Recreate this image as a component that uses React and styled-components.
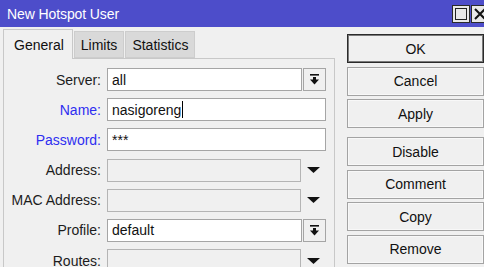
import styled, {createGlobalStyle} from "styled-components";

const GlobalStyle = createGlobalStyle`
    html, body {
        margin: 0;
        padding: 0;
        background: #f0f0f0;
    }
    body {
        font-family: "Liberation Sans", Arial, sans-serif;
        font-size: 14px;
        color: #1c1c1c;
    }
`

const fields = [
    {label: "Server", kind: "combo", value: "all"},
    {label: "Name", kind: "text", value: "nasigoreng", blue: true, caret: true},
    {label: "Password", kind: "text", value: "***", blue: true},
    {label: "Address", kind: "empty"},
    {label: "MAC Address", kind: "empty"},
    {label: "Profile", kind: "combo", value: "default"},
    {label: "Routes", kind: "empty"},
]

const actions = ["OK", "Cancel", "Apply", "Disable", "Comment", "Copy", "Remove"]

function ComboIcon() {
    return (
        <svg width="9" height="11" viewBox="0 0 9 11">
            <rect x="0" y="0" width="9" height="1.6" fill="#111"/>
            <rect x="3" y="3" width="3" height="3" fill="#111"/>
            <polygon points="0,5.5 9,5.5 4.5,10.5" fill="#111"/>
        </svg>
    )
}

function Field({field}) {
    if (field.kind === "combo") {
        return (
            <FieldRow>
                <TextBox>{field.value}</TextBox>
                <DropButton><ComboIcon/></DropButton>
            </FieldRow>
        )
    }
    if (field.kind === "empty") {
        return (
            <FieldRow>
                <TextBox $disabled/>
                <ArrowSlot>
                    <svg width="13" height="6" viewBox="0 0 13 6">
                        <polygon points="0,0 13,0 6.5,6" fill="#111"/>
                    </svg>
                </ArrowSlot>
            </FieldRow>
        )
    }
    return (
        <FieldRow>
            <TextBox>{field.value}{field.caret && <Caret/>}</TextBox>
        </FieldRow>
    )
}

export default function App() {
    return (
        <>
            <GlobalStyle/>
            <Window>
                <TitleBar>
                    <Title>New Hotspot User</Title>
                    <WinButton>
                        <svg width="14" height="14" viewBox="0 0 14 14">
                            <rect x="1.5" y="1.5" width="11" height="11" fill="none" stroke="#222" strokeWidth="1"/>
                        </svg>
                    </WinButton>
                    <WinButton>
                        <svg width="14" height="14" viewBox="0 0 14 14">
                            <path d="M2 2 L12 12 M12 2 L2 12" stroke="#111" strokeWidth="2"/>
                        </svg>
                    </WinButton>
                </TitleBar>

                <Body>
                    <LeftSide>
                        <Tabs>
                            <Tab $active>General</Tab>
                            <Tab>Limits</Tab>
                            <Tab>Statistics</Tab>
                        </Tabs>
                        <Panel>
                            <Form>
                                {fields.map(f => (
                                    <Row key={f.label}>
                                        <Label $blue={f.blue}>{f.label}:</Label>
                                        <Field field={f}/>
                                    </Row>
                                ))}
                            </Form>
                        </Panel>
                    </LeftSide>

                    <ButtonColumn>
                        {actions.map(a => (
                            <ActionButton key={a} $default={a === "OK"} $split={a === "Disable"}>
                                {a}
                            </ActionButton>
                        ))}
                    </ButtonColumn>
                </Body>
            </Window>
        </>
    )
}

const Window = styled.div`
    width: 484px;
    height: 267px;
    overflow: hidden;
    display: flex;
    flex-direction: column;
    background: #f0f0f0;
`

const TitleBar = styled.div`
    height: 27px;
    flex-shrink: 0;
    display: flex;
    align-items: center;
    background: #4d4dca;
    padding-left: 7px;
    gap: 1px;
`

const Title = styled.div`
    width: 444px;
    flex-shrink: 0;
    color: #fff;
    font-size: 14px;
    letter-spacing: -0.1px;
`

const WinButton = styled.div`
    width: 16px;
    height: 16px;
    flex-shrink: 0;
    display: flex;
    align-items: center;
    justify-content: center;
    background: #e8e8e8;
    border: 1px solid #2a2a2a;
`

const Body = styled.div`
    flex: 1;
    display: flex;
    padding-left: 3px;
    min-height: 0;
`

const LeftSide = styled.div`
    width: 332px;
    display: flex;
    flex-direction: column;
    padding-top: 2px;
`

const Tabs = styled.div`
    height: 29px;
    display: flex;
    align-items: flex-end;
    gap: 1px;
`

const Tab = styled.div`
    position: relative;
    z-index: ${p => p.$active ? 1 : 0};
    height: ${p => p.$active ? "29px" : "25px"};
    margin-bottom: ${p => p.$active ? "-1px" : "0"};
    padding: ${p => p.$active ? "0 8px 0 10px" : "0 6px"};
    display: flex;
    align-items: center;
    background: ${p => p.$active ? "#f0f0f0" : "#d9d9d9"};
    border: 1px solid ${p => p.$active ? "#c8c8c8" : "#cdcdcd"};
    border-bottom: ${p => p.$active ? "none" : "1px solid #cdcdcd"};
    color: #111;
`

const Panel = styled.div`
    flex: 1;
    border: 1px solid #c8c8c8;
    border-bottom: none;
    padding-top: 9px;
`

const Form = styled.div`
    display: flex;
    flex-direction: column;
    gap: 7.2px;
`

const Row = styled.div`
    display: grid;
    grid-template-columns: 97px 219px;
    column-gap: 6px;
    height: 23px;
`

const Label = styled.div`
    align-self: center;
    text-align: right;
    white-space: nowrap;
    color: ${p => p.$blue ? "#2e2ef0" : "#1c1c1c"};
`

const FieldRow = styled.div`
    display: flex;
    height: 23px;
`

const TextBox = styled.div`
    flex: 1;
    box-sizing: border-box;
    height: 23px;
    display: flex;
    align-items: center;
    padding-left: 4px;
    border: 1px solid ${p => p.$disabled ? "#b4b4b4" : "#a5a5a5"};
    background: ${p => p.$disabled ? "#f0f0f0" : "#fff"};
    color: #111;
`

const Caret = styled.span`
    display: inline-block;
    width: 1px;
    height: 17px;
    margin-left: 1px;
    background: #000;
`

const DropButton = styled.div`
    width: 23px;
    box-sizing: border-box;
    height: 23px;
    margin-left: 1px;
    display: flex;
    align-items: center;
    justify-content: center;
    background: #f0f0f0;
    border: 1px solid #a5a5a5;
`

const ArrowSlot = styled.div`
    width: 25px;
    display: flex;
    align-items: center;
    justify-content: center;
`

const ButtonColumn = styled.div`
    width: 137px;
    margin-left: 12px;
    padding-top: 7px;
    display: flex;
    flex-direction: column;
    gap: 3.5px;
`

const ActionButton = styled.div`
    box-sizing: border-box;
    height: 29px;
    flex-shrink: 0;
    margin-top: ${p => p.$split ? "5.5px" : "0"};
    display: flex;
    align-items: center;
    justify-content: center;
    background: #f0f0f0;
    border: 1px solid ${p => p.$default ? "#2b2b2b" : "#a3a3a3"};
    box-shadow: ${p => p.$default ? "inset 0 0 0 1px #7a7a7a" : "inset 0 0 0 1px #f8f8f8"};
    color: #111;
`
